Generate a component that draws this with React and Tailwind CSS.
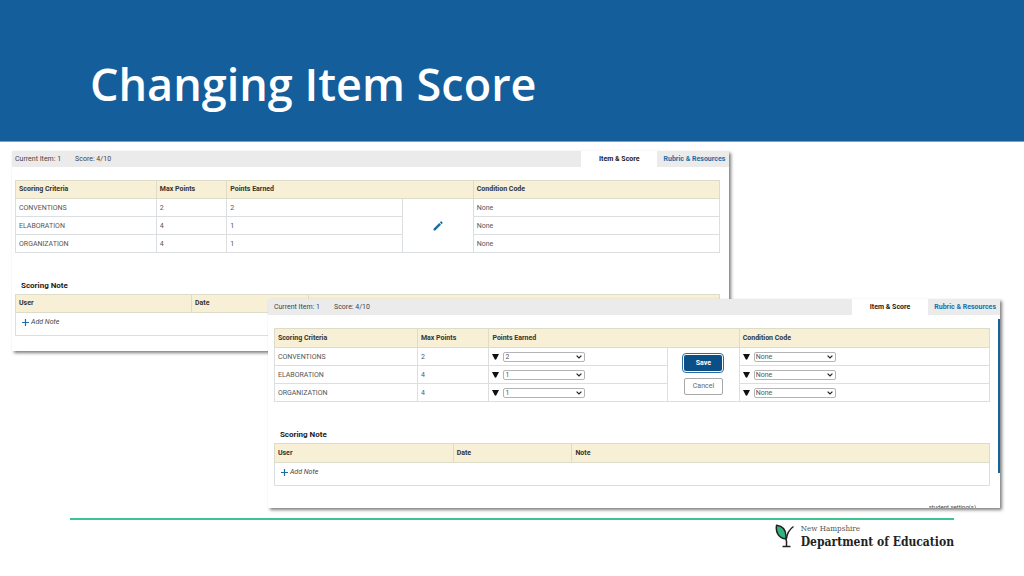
import React from "react";

const CRITERIA = [
  { name: "CONVENTIONS", max: 2, earned: 2 },
  { name: "ELABORATION", max: 4, earned: 1 },
  { name: "ORGANIZATION", max: 4, earned: 1 },
];

const HEAD = "border border-[#dddcc9] bg-[#f7f0d6] px-[3px] py-0 text-left font-bold text-[#333]";
const CELL = "border border-[#dcdfe2] px-[3px] pb-0 pt-px text-[#555]";

function Dropdown({ label, options, value }) {
  return (
    <div className="flex items-center gap-1">
      <svg viewBox="0 0 7 6" className="h-1.5 w-[7px] shrink-0 fill-[#111]" aria-hidden="true">
        <path d="M0 0h7L4.3 5.2a.9.9 0 0 1-1.6 0z" />
      </svg>
      <div className="grid w-[82px] items-center">
        <select
          aria-label={label}
          defaultValue={value}
          className="col-start-1 row-start-1 h-[10px] w-full appearance-none rounded-[2px] border border-[#b4b4b4] bg-white px-px text-[7px] leading-[8px] text-[#555]"
        >
          {options.map((o) => (
            <option key={o}>{o}</option>
          ))}
        </select>
        <svg
          viewBox="0 0 6 4"
          className="pointer-events-none col-start-1 row-start-1 mr-[3px] h-1 w-1.5 justify-self-end fill-none stroke-[#222]"
          aria-hidden="true"
        >
          <path d="M.6.6 3 3 5.4.6" strokeWidth="1.2" />
        </svg>
      </div>
    </div>
  );
}

function ScorePanel({ editing, headRow, className, children }) {
  return (
    <section
      className={
        "relative overflow-hidden bg-white font-['Roboto',sans-serif] text-[7px] leading-[9px] shadow-[2px_2px_3px_rgba(0,0,0,0.5)] " +
        className
      }
    >
      <header className="flex h-4 items-stretch bg-[#ebebeb] text-[#444]">
        <p className={"flex flex-1 items-center gap-3.5 " + (editing ? "pl-1.5" : "pl-[3px]")}>
          <span>Current Item: 1</span>
          <span>Score: 4/10</span>
        </p>
        <nav className="flex font-bold">
          <a href="#score" className="flex w-[76px] items-center justify-center bg-white text-[#222]">
            Item &amp; Score
          </a>
          <a href="#rubric" className="flex w-[72px] items-center justify-end pr-1 text-[#1b6fa8]">
            Rubric &amp; Resources
          </a>
        </nav>
      </header>

      <div className={editing ? "pl-1.5 pr-2.5 pt-[13px]" : "pl-[3px] pr-[9px] pt-[13px]"}>
        <table className="w-full table-fixed border-collapse">
          <colgroup>
            <col className="w-[20%]" />
            <col className="w-[10%]" />
            <col className="w-[25%]" />
            <col className="w-[10%]" />
            <col className="w-[35%]" />
          </colgroup>
          <thead>
            <tr className={headRow}>
              <th className={HEAD}>Scoring Criteria</th>
              <th className={HEAD}>Max Points</th>
              <th className={HEAD} colSpan={2}>
                Points Earned
              </th>
              <th className={HEAD}>Condition Code</th>
            </tr>
          </thead>
          <tbody>
            {CRITERIA.map((c, i) => (
              <tr key={c.name} className="h-[18px]">
                <td className={CELL}>{c.name}</td>
                <td className={CELL}>{c.max}</td>
                <td className={CELL}>
                  {editing ? (
                    <Dropdown label={c.name + " points"} options={[0, 1, 2, 3, 4]} value={c.earned} />
                  ) : (
                    c.earned
                  )}
                </td>
                {i === 0 && (
                  <td rowSpan={3} className={CELL}>
                    {editing ? (
                      <div className="flex flex-col items-center gap-[7px]">
                        <button
                          type="button"
                          className="h-4 w-[38px] rounded-[2px] bg-[#0b4f86] font-bold text-white outline-1 outline-offset-1 outline-[#2a6da3]"
                        >
                          Save
                        </button>
                        <button
                          type="button"
                          className="h-[17px] w-[39px] rounded-[2px] border border-[#a8a8a8] bg-white text-[#666]"
                        >
                          Cancel
                        </button>
                      </div>
                    ) : (
                      <button type="button" aria-label="Edit scores" className="mx-auto block">
                        <svg viewBox="0 0 20 20" className="size-2.5 fill-[#1b6f9f]" aria-hidden="true">
                          <path d="M1 15.500 12.500 4 16 7.500 4.500 19H1zM13.700 2.800 15.500 1a1.200 1.200 0 0 1 1.700 0L19 2.800a1.200 1.200 0 0 1 0 1.700L17.200 6.300z" />
                        </svg>
                      </button>
                    )}
                  </td>
                )}
                <td className={CELL}>
                  {editing ? (
                    <Dropdown label={c.name + " condition code"} options={["None"]} value="None" />
                  ) : (
                    "None"
                  )}
                </td>
              </tr>
            ))}
          </tbody>
        </table>

        <h2 className="mb-[3px] mt-7 pl-1.5 text-[8px] font-bold leading-[10px] text-[#222]">Scoring Note</h2>
        <table className="w-full table-fixed border-collapse">
          <colgroup>
            <col className="w-[25%]" />
            <col className="w-[16.6%]" />
            <col />
          </colgroup>
          <thead>
            <tr className={headRow}>
              <th className={HEAD}>User</th>
              <th className={HEAD}>Date</th>
              <th className={HEAD}>{editing && "Note"}</th>
            </tr>
          </thead>
          <tbody>
            <tr className="h-[23px]">
              <td colSpan={3} className={CELL}>
                <button type="button" className="mb-1 flex items-center gap-0.5 pl-[3px] italic text-[#444]">
                  <svg viewBox="0 0 7 7" className="size-[7px] stroke-[#1b6fa8]" aria-hidden="true">
                    <path d="M3.5 0v7M0 3.5h7" strokeWidth="1.2" />
                  </svg>
                  Add Note
                </button>
              </td>
            </tr>
          </tbody>
        </table>
      </div>
      {children}
    </section>
  );
}

export default function App() {
  return (
    <div className="min-h-screen bg-white">
      <header className="border-b border-[#6aa5cf] bg-[#145e9c] pb-[25px] pl-[90px] pt-[52px]">
        <h1 className="font-['Open_Sans','Noto_Sans',sans-serif] text-[45px] font-semibold leading-[64px] text-white">
          Changing Item Score
        </h1>
      </header>

      <main className="grid items-start pl-3 pr-6 pt-[9px]">
        <ScorePanel headRow="h-[18px]" className="col-start-1 row-start-1 w-[72.6%] pb-[15px]" />
        <ScorePanel
          editing
          headRow="h-[19px]"
          className="col-start-1 row-start-1 mt-[148px] w-[74.1%] justify-self-end"
        >
          <div className="absolute right-0 top-5 h-[154px] w-0.5 bg-[#14639a]" />
          <div className="mr-6 mt-[17px] h-[5px] overflow-hidden text-right text-[6px] leading-[7px] text-[#444]">
            <p>student setting(s)</p>
          </div>
        </ScorePanel>
      </main>

      <footer className="ml-[70px] mr-[70px] mt-[10px] flex justify-end border-t-2 border-[#3cc493] pt-1">
        <a href="#home" className="flex items-start gap-1.5 font-['DejaVu_Serif_Condensed','DejaVu_Serif',serif]">
          <svg viewBox="0 0 20 24" className="h-6 w-5" fill="none" aria-hidden="true">
            <path
              d="M1.600 1.200C7 2 12 5.500 10.800 14.800 4 14.300.2 8.500 1.600 1.200z"
              fill="#2fb380"
              stroke="#222"
              strokeWidth="1.500"
              strokeLinejoin="round"
            />
            <path
              d="M10.800 14.800L11.500 17V22.500M11.200 15.500C12 9.500 14 5.500 18.500 2.500M7.500 22.500h8"
              stroke="#222"
              strokeWidth="1.500"
            />
          </svg>
          <span className="flex flex-col text-[#222]">
            <span className="text-[8px] leading-[10px] text-[#555]">New Hampshire</span>
            <span className="text-[12px] font-bold leading-4">Department of Education</span>
          </span>
        </a>
      </footer>
    </div>
  );
}
